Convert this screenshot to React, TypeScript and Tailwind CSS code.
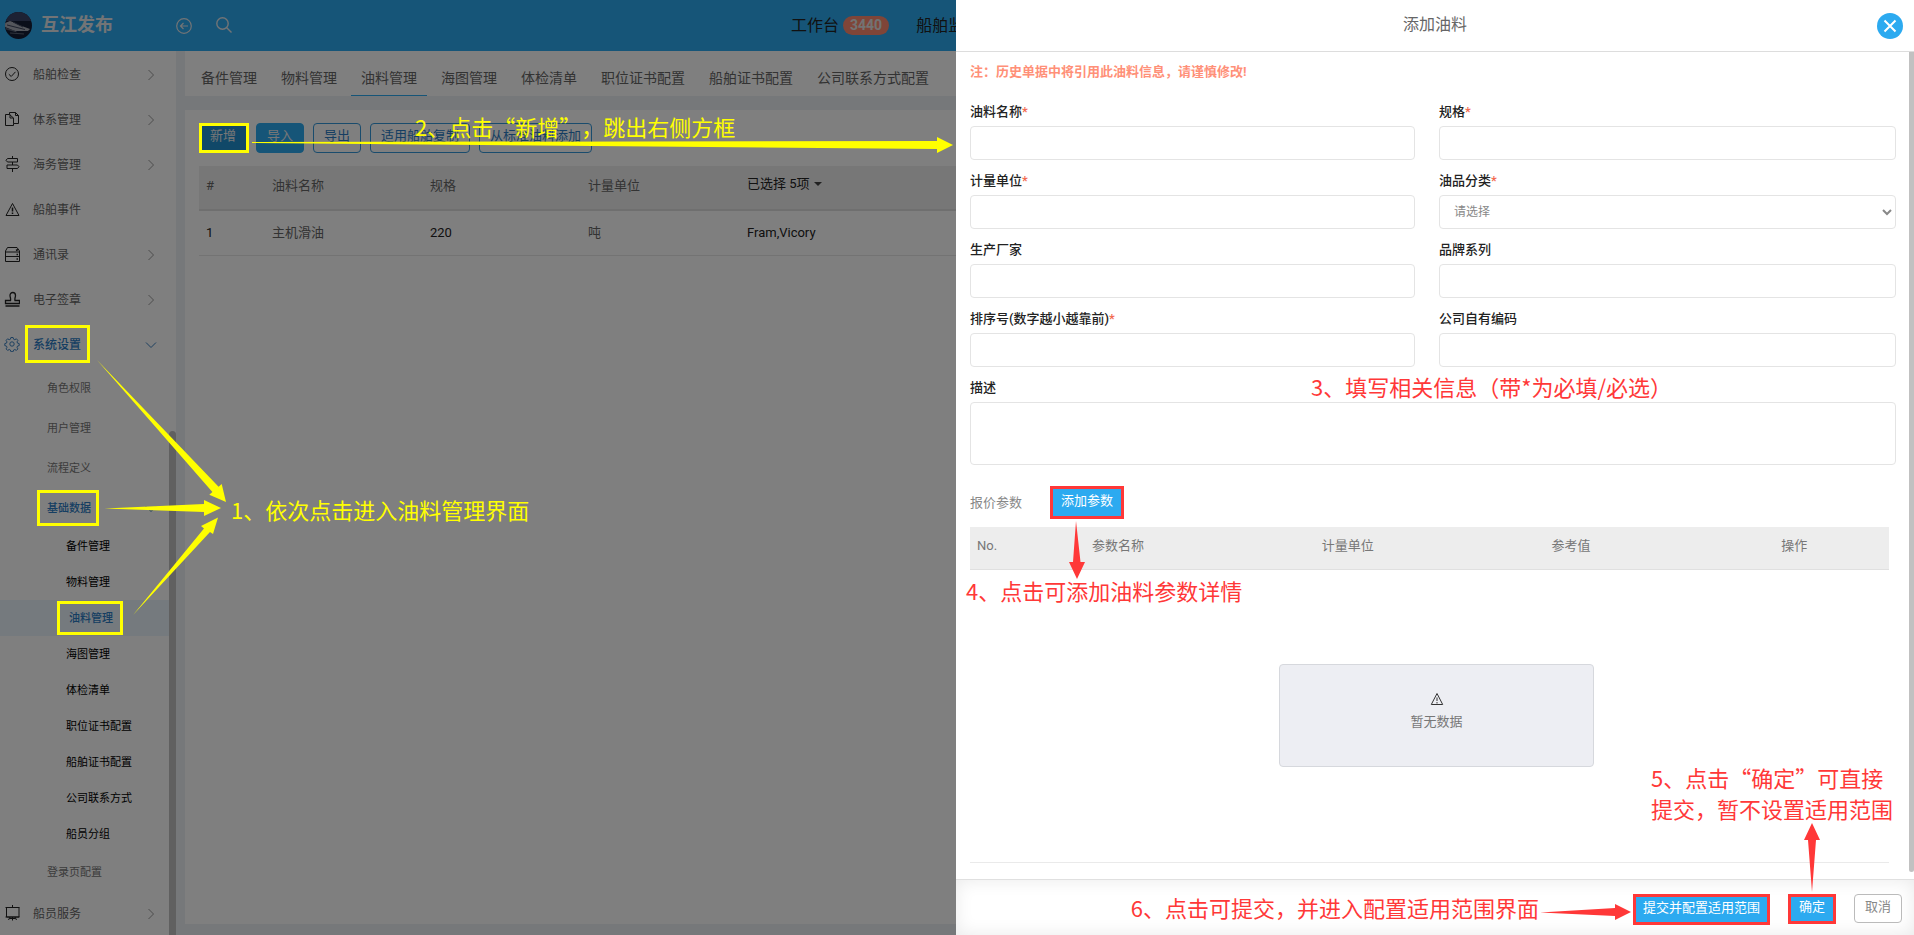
import { useState, type ReactNode } from "react";

type NavItem = {
  label: string;
  level: 1 | 2 | 3;
  icon?: ReactNode;
  chevron?: "right" | "down";
  active?: boolean;
  selected?: boolean;
  mark?: string;
};

const line = {
  width: 16,
  height: 16,
  viewBox: "0 0 16 16",
  fill: "none",
  stroke: "currentColor",
  strokeWidth: 1,
};

const CheckIcon = () => (
  <svg {...line}>
    <circle cx="8" cy="8" r="6.500" />
    <path d="M4.800 8.200 7.200 10.500 11.500 5.800" />
  </svg>
);

const DocsIcon = () => (
  <svg {...line}>
    <path d="M9.500 12.500v2h-8v-11h4l4 3.500" />
    <path d="M5.500 3.500v-2h6l3 3v8h-5V7H6V3.500M11.500 1.500v3h3" />
  </svg>
);

const SignIcon = () => (
  <svg {...line}>
    <path d="M8.500 0v2.500M8.500 6v3M8.500 12.500V16" />
    <path d="M3.500 2.500h10V6h-10L2 4.300zM3 9h10.500l1.500 1.700-1.500 1.800H3z" />
  </svg>
);

const WarnIcon = () => (
  <svg {...line}>
    <path d="M8.500 2.500 15 14.500H2z" />
    <path d="M8.500 6.500v4M8.500 11.500V13" strokeWidth="1.500" />
  </svg>
);

const BooksIcon = () => (
  <svg {...line}>
    <path d="M3.500 1.500h9.500l2.500 3.500v10.500h-14V5zM1.500 6h14M1.500 10.500h14" />
    <path d="M12 4.500l2-1M12.500 8.500h1.500M12.500 13h1.500" strokeWidth="1.500" />
  </svg>
);

const StampIcon = () => (
  <svg {...line} strokeWidth={1.3}>
    <path d="M6.500 9.500c.5-2-.5-3.500-.5-5 0-4 5.500-4 5.500 0 0 1.500-1 3-.5 5h4.500v3h-14v-3zM1.500 15h14" />
  </svg>
);

const GearIcon = () => (
  <svg {...line}>
    <circle cx="8" cy="8" r="2.200" />
    <path
      strokeLinejoin="round"
      d="M6.900 1.500h2.200l.5 1.700 1.200.5 1.600-.9 1.500 1.600-.9 1.500.5 1.200 1.700.5v2l-1.700.5-.5 1.200.9 1.600-1.500 1.500-1.600-.9-1.200.5-.5 1.700H6.900l-.5-1.700-1.200-.5-1.600.9-1.500-1.500.9-1.600-.5-1.200-1.700-.5v-2l1.700-.5.5-1.200-.9-1.500 1.500-1.600 1.600.9 1.200-.5z"
    />
  </svg>
);

const BoardIcon = () => (
  <svg {...line}>
    <path d="M8.500 0v2M2.500 2.500h12.500v9.500H2.500zM6 12l-1.500 3M11 12l1.500 3M8.500 12v3.500M5.500 13.500h6" />
    <path d="M1.500 2.500h14M1.500 12h14" />
  </svg>
);

const navItems: NavItem[] = [
  { label: "船舶检查", level: 1, icon: <CheckIcon />, chevron: "right" },
  { label: "体系管理", level: 1, icon: <DocsIcon />, chevron: "right" },
  { label: "海务管理", level: 1, icon: <SignIcon />, chevron: "right" },
  { label: "船舶事件", level: 1, icon: <WarnIcon /> },
  { label: "通讯录", level: 1, icon: <BooksIcon />, chevron: "right" },
  { label: "电子签章", level: 1, icon: <StampIcon />, chevron: "right" },
  {
    label: "系统设置",
    level: 1,
    icon: <GearIcon />,
    chevron: "down",
    active: true,
    mark: "left-[25px] top-[2px] h-[38px] w-[65px]",
  },
  { label: "角色权限", level: 2 },
  { label: "用户管理", level: 2 },
  { label: "流程定义", level: 2 },
  {
    label: "基础数据",
    level: 2,
    chevron: "down",
    active: true,
    mark: "left-[37px] top-[2px] h-[36px] w-[62px]",
  },
  { label: "备件管理", level: 3 },
  { label: "物料管理", level: 3 },
  {
    label: "油料管理",
    level: 3,
    active: true,
    selected: true,
    mark: "left-[57px] top-px h-[34px] w-[66px]",
  },
  { label: "海图管理", level: 3 },
  { label: "体检清单", level: 3 },
  { label: "职位证书配置", level: 3 },
  { label: "船舶证书配置", level: 3 },
  { label: "公司联系方式", level: 3 },
  { label: "船员分组", level: 3 },
  { label: "登录页配置", level: 2 },
  { label: "船员服务", level: 1, icon: <BoardIcon />, chevron: "right" },
];

const levelClass = {
  1: "h-[45px] pl-[33px] pb-[2px] text-[12px] text-[#666]",
  2: "h-[40px] pl-[47px] pt-[2px] text-[11px] text-[#777]",
  3: "h-[36px] pl-[66px] pt-[2px] text-[11px] text-black",
};

const tabs = [
  "备件管理",
  "物料管理",
  "油料管理",
  "海图管理",
  "体检清单",
  "职位证书配置",
  "船舶证书配置",
  "公司联系方式配置",
];

function Chevron({ dir }: { dir: "right" | "down" }) {
  return (
    <svg
      className={
        dir === "down"
          ? "absolute left-[145px] text-[#3a7fc0]"
          : "absolute left-[146px] text-[#999]"
      }
      width="12"
      height="12"
      viewBox="0 0 12 12"
      fill="none"
      stroke="currentColor"
    >
      <path d={dir === "down" ? "M1 3.500 6 8.500 11 3.500" : "M2.500 1 7.500 6 2.500 11"} />
    </svg>
  );
}

function Sidebar() {
  return (
    <nav className="relative w-[176px] shrink-0 overflow-hidden bg-white pt-[2px]">
      {navItems.map((item) => (
        <a
          key={item.label + item.level}
          href="#"
          className={`relative flex items-center ${levelClass[item.level]} ${
            item.selected ? "bg-[#eaf5fd]" : ""
          }`}
        >
          {item.icon && (
            <span
              className={`absolute top-[13px] left-[4px] ${item.active ? "text-[#3a7fc0]" : "text-[#222]"}`}
            >
              {item.icon}
            </span>
          )}
          <span className={`${item.active ? "font-medium text-[#2c7cc4]" : ""} ${item.selected ? "ml-[3px]" : ""}`}>
            {item.label}
          </span>
          {item.chevron && <Chevron dir={item.chevron} />}
          {item.mark && (
            <span className={`absolute z-20 border-3 border-[#ffff00] ${item.mark}`} />
          )}
        </a>
      ))}
      <div className="absolute bottom-0 right-0 top-[380px] w-[7px] rounded-t bg-[#c1c1c1]" />
    </nav>
  );
}

function TopBar() {
  return (
    <header className="flex h-[51px] shrink-0 items-center bg-[#2caaf0] text-white">
      <svg className="ml-[5px] shrink-0" width="27" height="27" viewBox="0 0 27 27">
        <defs>
          <clipPath id="logo">
            <circle cx="13.500" cy="13.500" r="13.500" />
          </clipPath>
        </defs>
        <g clipPath="url(#logo)">
          <rect width="27" height="27" fill="#141c34" />
          <rect width="27" height="9" fill="#3a4468" />
          <path d="M0 11l5-2 4 1.500 5 2.500 11 4-2 2H10L0 15z" fill="#a9adb8" />
          <path d="M2 13l18 4.500M8 10l10 5M0 17l12 3" stroke="#3b435c" />
          <path d="M1 16.500l10 3M5 21l14 1" stroke="#7d8494" strokeWidth="0.700" />
        </g>
      </svg>
      <h1 className="ml-[9px] pb-[2px] text-[18px] font-bold text-[#e4e8ec]">互江发布</h1>
      <button aria-label="返回" className="ml-[63px]">
        <svg {...line} strokeWidth={1.2} className="text-[#e4e8ec]">
          <circle cx="8" cy="8" r="7.300" />
          <path d="M12 8H4.500M7.500 5 4.500 8l3 3" />
        </svg>
      </button>
      <button aria-label="搜索" className="ml-[24px] pb-[2px]">
        <svg {...line} strokeWidth={1.4} className="text-[#e4e8ec]">
          <circle cx="6.500" cy="6.500" r="5.700" />
          <path d="m10.500 10.500 5 5" />
        </svg>
      </button>
      <div className="ml-[559px] flex shrink-0 items-center text-[16px] text-[#222]">
        <a href="#">工作台</a>
        <span className="ml-1 rounded-full bg-[#ff8a70] px-[7px] text-[14px] leading-[19px] font-bold text-[#e6e6e6]">
          3440
        </span>
        <a href="#" className="ml-[27px]">
          船舶监控
        </a>
      </div>
    </header>
  );
}

const outlineBtn =
  "h-[30px] rounded border border-[#3498db] px-[10px] leading-[24px] pb-1 text-[13px] text-[#2c7cc4]";

function OilList() {
  return (
    <section className="mt-[14px] mb-[11px] flex-1 bg-white px-[14px] pt-[13px]">
      <div className="flex gap-[9px]">
        <button className="relative h-[30px] rounded border border-[#2090d0] bg-[#2090d0] px-[10px] pb-1 text-[13px] leading-[24px] text-[#eee]">
          新增
          <span className="absolute -inset-y-px -right-[3px] -left-px z-20 border-3 border-[#ffff00]" />
        </button>
        <button className="h-[30px] rounded border border-[#2caaf0] bg-[#2caaf0] px-[10px] pb-1 text-[13px] leading-[24px] text-[#eee]">
          导入
        </button>
        <button className={outlineBtn}>导出</button>
        <button className={outlineBtn}>适用船舶复制</button>
        <button className={outlineBtn}>从标准油料添加</button>
      </div>
      <table className="mt-[13px] w-full table-fixed text-left text-[13px]">
        <colgroup>
          <col className="w-[66px]" />
          <col className="w-[158px]" />
          <col className="w-[158px]" />
          <col className="w-[159px]" />
          <col />
        </colgroup>
        <thead>
          <tr className="h-[44px] border-b-2 border-[#dedede] bg-[#efefef] text-[#666]">
            <th className="px-[7px] pb-1 font-normal">#</th>
            <th className="px-[7px] pb-1 font-normal">油料名称</th>
            <th className="px-[7px] pb-1 font-normal">规格</th>
            <th className="px-[7px] pb-1 font-normal">计量单位</th>
            <th className="px-[7px] pb-2 font-normal text-[#222]">
              <button className="flex items-center">
                已选择 5项
                <span className="ml-1 border-x-4 border-t-4 border-x-transparent border-t-[#444]" />
              </button>
            </th>
          </tr>
        </thead>
        <tbody>
          <tr className="h-[45px] border-b border-[#e7e7e7] text-[#222]">
            <td className="px-[7px]">1</td>
            <td className="px-[7px] text-[#666]">主机滑油</td>
            <td className="px-[7px]">220</td>
            <td className="px-[7px] text-[#666]">吨</td>
            <td className="px-[7px]">Fram,Vicory</td>
          </tr>
        </tbody>
      </table>
    </section>
  );
}

function Field({
  id,
  label,
  required,
  children,
}: {
  id: string;
  label: string;
  required?: boolean;
  children?: ReactNode;
}) {
  return (
    <div>
      <label htmlFor={id} className="mb-1 block text-[13px] leading-[20px] font-medium text-[#222]">
        {label}
        {required && <span className="text-[#f26a50]">*</span>}
      </label>
      {children ?? (
        <input id={id} className="block h-[34px] w-full rounded border border-[#e4e4e4] px-3 text-[12px]" />
      )}
    </div>
  );
}

function Note({ className, children }: { className: string; children: ReactNode }) {
  return (
    <p
      className={`absolute z-20 font-['Noto_Sans_CJK_SC',sans-serif] text-[22px] leading-[31px] whitespace-nowrap [text-spacing-trim:space-all] ${className}`}
    >
      {children}
    </p>
  );
}

function Drawer() {
  const [category, setCategory] = useState("");

  return (
    <aside className="absolute inset-y-0 right-0 z-20 flex w-[calc(50%+1px)] flex-col bg-white">
      <header className="relative flex h-[52px] shrink-0 items-center justify-center border-b border-[#ddd] pb-[2px]">
        <h2 className="text-[16px] text-[#666]">添加油料</h2>
        <button
          aria-label="关闭"
          className="absolute right-[11px] top-[13px] flex size-[26px] items-center justify-center rounded-full bg-[#2caaf0]"
        >
          <svg width="14" height="14" viewBox="0 0 14 14" stroke="white" strokeWidth="2">
            <path d="m1.500 1.500 11 11M12.500 1.500l-11 11" />
          </svg>
        </button>
      </header>

      <div className="relative flex-1 overflow-hidden pt-[10px] pr-[11px] pl-[14px]">
        <p className="mb-5 text-[13px] leading-[20px] font-bold text-[#ff9078]">
          注：历史单据中将引用此油料信息，请谨慎修改!
        </p>

        <form className="mr-[7px] grid grid-cols-[445fr_457fr] gap-x-6 gap-y-[11px]">
          <Field id="name" label="油料名称" required />
          <Field id="spec" label="规格" required />
          <Field id="unit" label="计量单位" required />
          <Field id="category" label="油品分类" required>
            <select
              id="category"
              value={category}
              onChange={(e) => setCategory(e.target.value)}
              className="block h-[34px] w-full rounded border border-[#e4e4e4] bg-white pl-[10px] text-[12px] text-[#888]"
            >
              <option value="">请选择</option>
            </select>
          </Field>
          <Field id="maker" label="生产厂家" />
          <Field id="brand" label="品牌系列" />
          <Field id="sort" label="排序号(数字越小越靠前)" required />
          <Field id="code" label="公司自有编码" />
          <div className="col-span-2">
            <Field id="desc" label="描述">
              <textarea
                id="desc"
                className="block h-[63px] w-full resize-none rounded border border-[#e4e4e4] px-3 py-2 text-[12px]"
              />
            </Field>
          </div>
        </form>

        <div className="mt-[21px] flex items-center text-[13px] text-[#888]">
          报价参数
          <button className="ml-7 h-[33px] border-3 border-[#ff3838] bg-[#2caaf0] px-2 pb-1 text-white">
            添加参数
          </button>
        </div>

        <table className="mt-2 w-[calc(100%-14px)] table-fixed text-left text-[13px] text-[#777]">
          <thead>
            <tr className="h-[42px] border-b border-[#e0e0e0] bg-[#ededed]">
              <th className="w-[12.5%] px-[7px] pb-1 font-normal">No.</th>
              <th className="w-1/4 px-[7px] pb-1 font-normal">参数名称</th>
              <th className="w-1/4 px-[7px] pb-1 font-normal">计量单位</th>
              <th className="w-1/4 px-[7px] pb-1 font-normal">参考值</th>
              <th className="w-[12.5%] px-[7px] pb-1 font-normal">操作</th>
            </tr>
          </thead>
        </table>

        <div className="mx-auto mt-[94px] flex h-[103px] w-[315px] flex-col items-center rounded border border-[#d6d8dd] bg-[#edeef3] pt-[26px] text-[13px] text-[#777]">
          <svg {...line} className="text-[#333]">
            <path d="M8 2.500 13.700 13.500H2.300z" />
            <path d="M8 6.500V10M8 11v1.500" />
          </svg>
          <span className="mt-[5px] leading-[20px]">暂无数据</span>
        </div>
        <hr className="mt-[95px] mr-[14px] border-[#eaeaea]" />
        <div className="absolute top-0 right-0 bottom-[7px] w-[5px] rounded-b bg-[#c1c1c1]" />
      </div>

      <footer className="flex h-[56px] shrink-0 items-start justify-end gap-[18px] border-t border-[#e0e0e0] pt-[14px] pr-3 text-[13px] shadow-[inset_0_0_18px_rgba(0,0,0,0.09)]">
        <button className="h-[31px] border-3 border-[#ff3838] bg-[#2caaf0] px-[7px] pb-1 leading-[21px] text-white">
          提交并配置适用范围
        </button>
        <button className="h-[30px] border-3 border-[#ff3838] bg-[#2caaf0] px-2 pb-1 leading-[20px] text-white">
          确定
        </button>
        <button className="h-[29px] rounded border border-[#bbb] bg-white px-[10px] pb-1 leading-[23px] text-[#888]">
          取消
        </button>
      </footer>

      <Note className="top-[371px] left-[355px] text-[#ff3838]">3、填写相关信息（带*为必填/必选）</Note>
      <Note className="top-[575px] left-[10px] text-[#ff3838]">4、点击可添加油料参数详情</Note>
      <Note className="right-[21px] bottom-[111px] text-[#ff3838]">
        5、点击“确定”可直接
        <br />
        提交，暂不设置适用范围
      </Note>
      <Note className="right-[375px] bottom-[12px] text-[#ff3838]">6、点击可提交，并进入配置适用范围界面</Note>
      <svg className="pointer-events-none absolute top-[520px] left-[112px]" width="18" height="60" fill="#ff3838">
        <path d="M8 1 12.500 42H17L9 59 1 42h4z" />
      </svg>
      <svg className="pointer-events-none absolute right-[93px] bottom-[42px]" width="18" height="71" fill="#ff3838">
        <path d="M9 70 5 18H1L9 1l8 17h-4z" />
      </svg>
      <svg className="pointer-events-none absolute right-[282px] bottom-[14px]" width="92" height="18" fill="#ff3838">
        <path d="M0 9.500 75 5V1l16 8-16 8v-4z" />
      </svg>
    </aside>
  );
}

export default function App() {
  const [tab, setTab] = useState("油料管理");

  return (
    <div className="relative flex h-screen flex-col overflow-hidden bg-[#ecf0f4] font-[Roboto,'Noto_Sans_CJK_SC',sans-serif]">
      <TopBar />
      <div className="flex min-h-0 flex-1">
        <Sidebar />
        <main className="flex min-w-0 flex-1 flex-col pl-[9px]">
          <div className="flex h-[45px] shrink-0 gap-1 bg-white px-[6px]">
            {tabs.map((name) => (
              <button
                key={name}
                onClick={() => setTab(name)}
                className={`border-b px-[10px] pt-[10px] text-[14px] whitespace-nowrap text-[#666] ${
                  tab === name ? "border-[#2caaf0]" : "border-transparent"
                }`}
              >
                {name}
              </button>
            ))}
          </div>
          <OilList />
        </main>
      </div>

      {/* Mask under the drawer */}
      <div className="absolute inset-0 z-10 bg-black/50" />

      <Drawer />

      {/* Walkthrough hints */}
      <Note className="top-[494px] left-[231px] text-[#ffff00]">1、依次点击进入油料管理界面</Note>
      <Note className="top-[111px] left-[415px] text-[#ffff00]">2、点击“新增”，跳出右侧方框</Note>
      <svg className="pointer-events-none absolute inset-0 z-20 size-full" fill="#ffff00">
        <path d="M97 360 218.600 486.700 221.700 484 226 502 209.300 494.700 212.400 492z" />
        <path d="M104.500 508.500 204 504v-4l17 8-17 8v-4z" />
        <path d="M133 615 204 528.500 201 526 218 517.500 213 534 210 532z" />
        <path d="M252 142 937 141v-4l16 8-16 8v-4L252 143z" />
      </svg>
    </div>
  );
}
